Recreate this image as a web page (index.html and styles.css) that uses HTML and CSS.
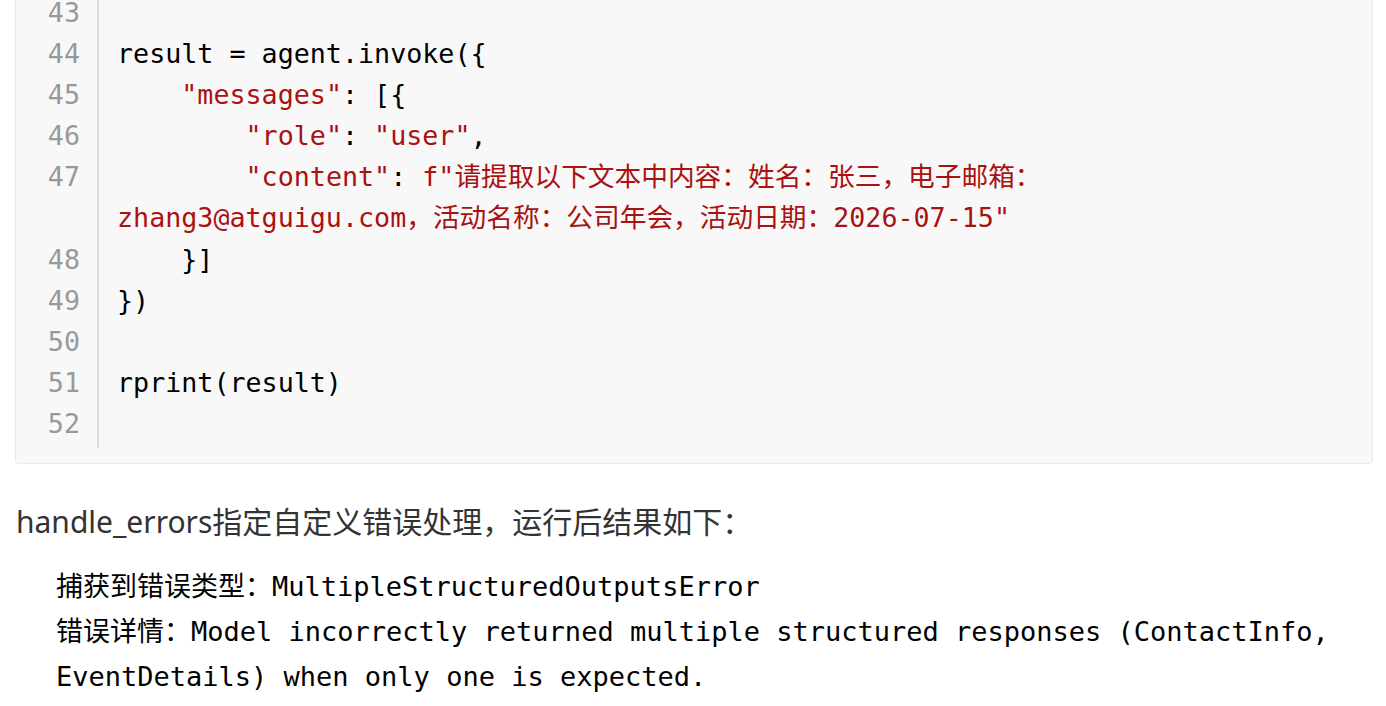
FILE: index.html
```html
<!DOCTYPE html>
<html lang="zh">
<head>
<meta charset="utf-8">
<link rel="stylesheet" href="styles.css">
</head>
<body>
<div class="page">
  <div class="code-block">
    <div class="lines">
      <div class="ln">43</div><div class="code"></div>
      <div class="ln">44</div><div class="code">result = agent.invoke({</div>
      <div class="ln">45</div><div class="code">    <span class="str">"messages"</span>: [{</div>
      <div class="ln">46</div><div class="code">        <span class="str">"role"</span>: <span class="str">"user"</span>,</div>
      <div class="ln">47</div><div class="code">        <span class="str">"content"</span>: <span class="str">f"请提取以下文本中内容：姓名：张三，电子邮箱：<br>zhang3@atguigu.com，活动名称：公司年会，活动日期：2026-07-15"</span></div>
      <div class="ln">48</div><div class="code">    }]</div>
      <div class="ln">49</div><div class="code">})</div>
      <div class="ln">50</div><div class="code"></div>
      <div class="ln">51</div><div class="code">rprint(result)</div>
      <div class="ln">52</div><div class="code"></div>
      <div class="ln tail"></div><div class="code tail"></div>
    </div>
  </div>
  <p class="para">handle_errors指定自定义错误处理，运行后结果如下：</p>
  <pre class="output">捕获到错误类型：MultipleStructuredOutputsError
错误详情：Model incorrectly returned multiple structured responses (ContactInfo,
EventDetails) when only one is expected.</pre>
</div>
</body>
</html>
```
FILE: styles.css
```css
html, body {
  margin: 0;
  padding: 0;
  background: #ffffff;
}
.page {
  padding: 0 13px 0 15px;
  margin-top: -20px;
}
.code-block {
  background: #f8f8f8;
  border: 1px solid #e7eaed;
  border-radius: 4px;
  padding: 11px 0 15px 0;
}
.lines {
  display: grid;
  grid-template-columns: 83px 1fr;
  font-family: "DejaVu Sans Mono", "Noto Sans CJK SC", monospace;
  font-size: 26.7px;
  line-height: 41.1px;
}
.ln {
  color: #999999;
  text-align: right;
  padding-right: 17px;
  border-right: 2px solid #dddddd;
  min-height: 41.1px;
}
.ln.tail, .code.tail {
  min-height: 4px;
  height: 4px;
}
.code {
  color: #000000;
  padding-left: 18px;
  white-space: pre;
  min-height: 41.1px;
}
.str {
  color: #aa1111;
}
.para {
  margin: 36px 0 0 1px;
  font-family: "Noto Sans", "Noto Sans CJK SC", sans-serif;
  font-size: 30px;
  line-height: 43px;
  color: #333333;
}
.output {
  margin: 21px 0 0 41px;
  font-family: "DejaVu Sans Mono", "Noto Sans CJK SC", monospace;
  font-size: 27px;
  line-height: 45px;
  color: #000000;
}
```
